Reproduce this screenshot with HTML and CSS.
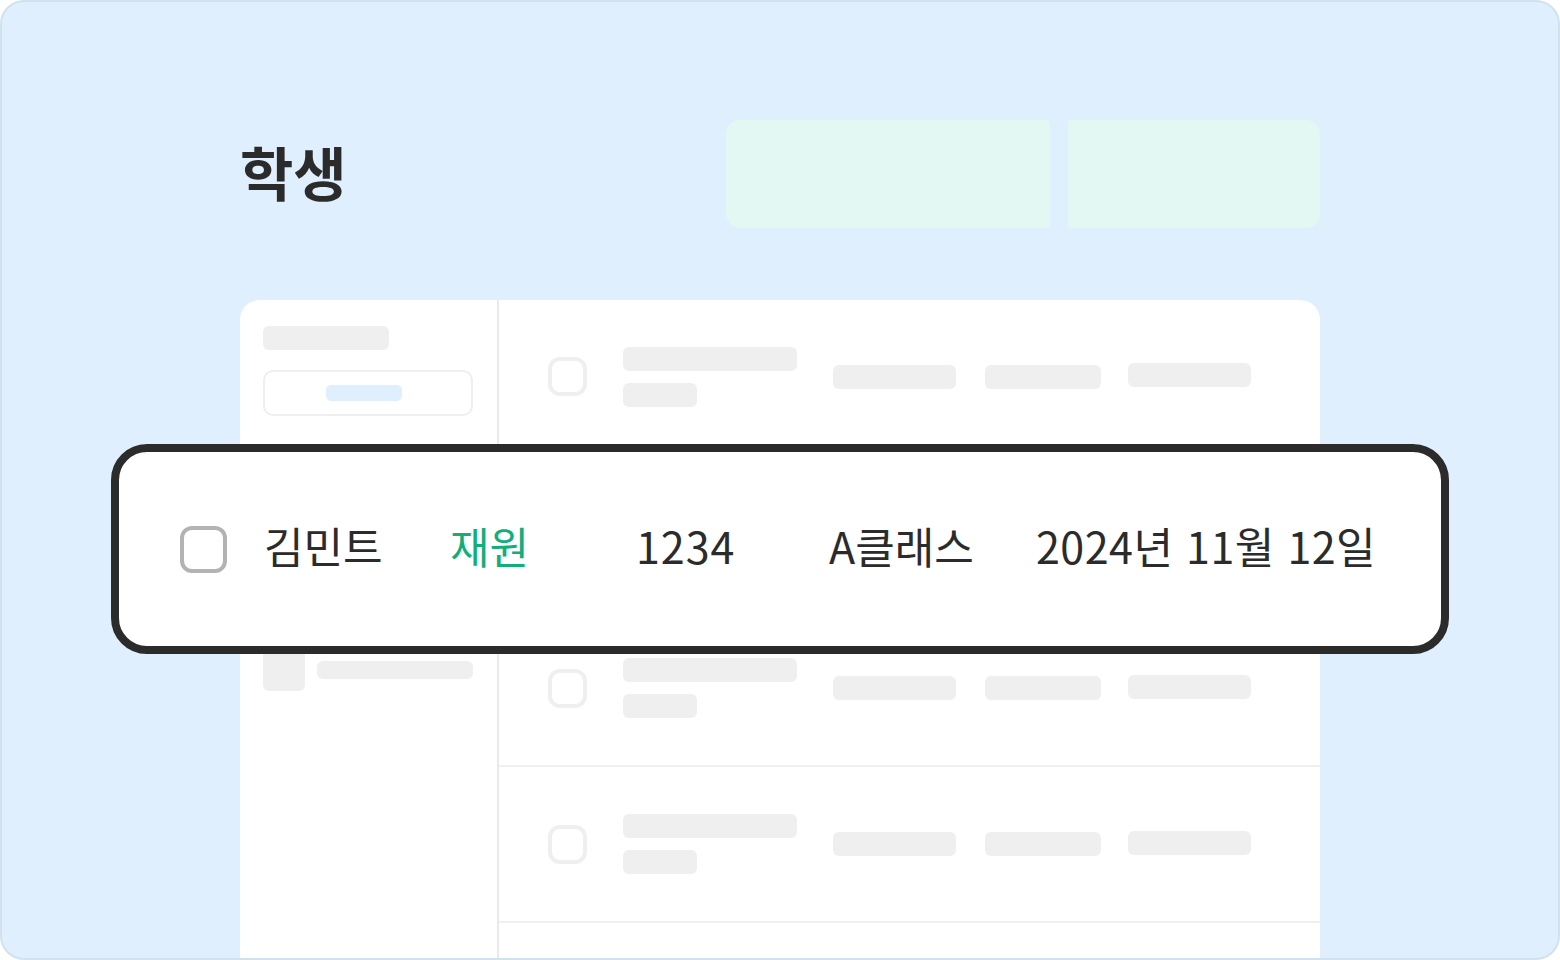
FILE: index.html
```html
<!DOCTYPE html>
<html lang="ko">
<head>
    <meta charset="UTF-8">
    <meta name="viewport" content="width=device-width, initial-scale=1.0">
    <title>학생</title>
    <link rel="stylesheet" href="styles.css">
</head>
<body>
    <div class="frame">
        <header class="page-header">
            <h1>학생</h1>
            <div class="header-actions">
                <div class="action action-left"></div>
                <div class="action action-right"></div>
            </div>
        </header>

        <div class="card">
            <aside class="sidebar">
                <div class="bar side-title"></div>
                <div class="side-button"><span class="side-button-fill"></span></div>
                <div class="side-list">
                    <div class="side-item"><span class="side-icon"></span><span class="bar side-label"></span></div>
                    <div class="side-item"><span class="side-icon"></span><span class="bar side-label"></span></div>
                    <div class="side-item"><span class="side-icon"></span><span class="bar side-label"></span></div>
                    <div class="side-item"><span class="side-icon"></span><span class="bar side-label"></span></div>
                </div>
            </aside>
            <section class="table">
                <div class="row row-first">
                    <span class="check"></span>
                    <div class="name-cell">
                        <span class="bar bar-name"></span>
                        <span class="bar bar-sub"></span>
                    </div>
                    <span class="bar col-a"></span>
                    <span class="bar col-b"></span>
                    <span class="bar col-c"></span>
                </div>
                <div class="row">
                    <span class="check"></span>
                    <div class="name-cell">
                        <span class="bar bar-name"></span>
                        <span class="bar bar-sub"></span>
                    </div>
                    <span class="bar col-a"></span>
                    <span class="bar col-b"></span>
                    <span class="bar col-c"></span>
                </div>
                <div class="row">
                    <span class="check"></span>
                    <div class="name-cell">
                        <span class="bar bar-name"></span>
                        <span class="bar bar-sub"></span>
                    </div>
                    <span class="bar col-a"></span>
                    <span class="bar col-b"></span>
                    <span class="bar col-c"></span>
                </div>
                <div class="row">
                    <span class="check"></span>
                    <div class="name-cell">
                        <span class="bar bar-name"></span>
                        <span class="bar bar-sub"></span>
                    </div>
                    <span class="bar col-a"></span>
                    <span class="bar col-b"></span>
                    <span class="bar col-c"></span>
                </div>
                <div class="row"></div>
            </section>
        </div>

        <!-- 강조된 학생 행 -->
        <div class="highlight">
            <span class="hl-check"></span>
            <span class="hl-cell hl-name">김민트</span>
            <span class="hl-cell hl-status">재원</span>
            <span class="hl-cell hl-number">1234</span>
            <span class="hl-cell hl-class">A클래스</span>
            <span class="hl-cell hl-date">2024년 11월 12일</span>
        </div>
    </div>
</body>
</html>
```

FILE: styles.css
```css
body {
    margin: 0;
    padding: 0;
    background-color: #fff;
    font-family: "Noto Sans CJK KR", "Noto Sans", sans-serif;
    color: #2b2b2b;
}

.frame {
    position: relative;
    width: 1560px;
    height: 960px;
    box-sizing: border-box;
    border: 2px solid #d2e1ee;
    border-radius: 24px;
    background-color: #e0effd;
    overflow: hidden;
}

.page-header {
    display: flex;
    justify-content: space-between;
    align-items: center;
    height: 108px;
    margin-top: 118px;
    padding: 0 238px 0 238px;
}
.page-header h1 {
    margin: -6px 0 0 0;
    font-size: 58px;
    font-weight: 700;
    line-height: 1;
    color: #2b2b2b;
}
.header-actions {
    display: flex;
    gap: 18px;
    height: 100%;
}
.action {
    background-color: #e3f7f3;
    height: 100%;
}
.action-left {
    width: 324px;
    border-radius: 14px 4px 4px 14px;
}
.action-right {
    width: 252px;
    border-radius: 4px 14px 14px 4px;
}

.card {
    display: flex;
    width: 1080px;
    height: 700px;
    margin: 72px 0 0 238px;
    background-color: #fff;
    border-radius: 20px 20px 0 0;
}

.bar {
    display: block;
    background-color: #efefef;
    border-radius: 6px;
}

/* sidebar */
.sidebar {
    width: 259px;
    flex-shrink: 0;
    border-right: 2px solid #e9e9e9;
    padding: 26px 0 0 23px;
    box-sizing: border-box;
}
.side-title {
    width: 126px;
    height: 24px;
}
.side-button {
    display: flex;
    justify-content: center;
    align-items: center;
    width: 210px;
    height: 46px;
    margin-top: 20px;
    box-sizing: border-box;
    border: 2px solid #efefef;
    border-radius: 10px;
}
.side-button-fill {
    width: 76px;
    height: 16px;
    margin-right: 8px;
    background-color: #e0effd;
    border-radius: 5px;
}
.side-list {
    display: flex;
    flex-direction: column;
    gap: 19px;
    margin-top: 50px;
}
.side-item {
    display: flex;
    align-items: center;
    gap: 12px;
}
.side-icon {
    width: 42px;
    height: 42px;
    background-color: #efefef;
    border-radius: 6px;
}
.side-label {
    width: 156px;
    height: 18px;
}

/* table */
.table {
    flex: 1;
    display: flex;
    flex-direction: column;
}
.row {
    display: flex;
    align-items: center;
    height: 156px;
    flex-shrink: 0;
    box-sizing: border-box;
    border-bottom: 2px solid #efefef;
    padding-left: 49px;
}
.row-first {
    height: 155px;
}
.check {
    width: 39px;
    height: 39px;
    box-sizing: border-box;
    border: 4px solid #efefef;
    border-radius: 12px;
}
.name-cell {
    display: flex;
    flex-direction: column;
    gap: 12px;
    margin-left: 36px;
}
.bar-name {
    width: 174px;
    height: 24px;
}
.bar-sub {
    width: 74px;
    height: 24px;
}
.col-a {
    width: 123px;
    height: 24px;
    margin-left: 36px;
}
.col-b {
    width: 116px;
    height: 24px;
    margin-left: 29px;
}
.col-c {
    width: 123px;
    height: 24px;
    margin-left: 27px;
    margin-top: -3px;
}

/* highlighted row */
.highlight {
    position: absolute;
    left: 109px;
    top: 442px;
    width: 1338px;
    height: 210px;
    box-sizing: border-box;
    border: 8px solid #2b2b2b;
    border-radius: 36px;
    background-color: #fff;
    display: flex;
    align-items: center;
    padding-left: 61px;
}
.hl-check {
    width: 47px;
    height: 47px;
    box-sizing: border-box;
    border: 4px solid #b3b3b3;
    border-radius: 12px;
    margin-right: 37px;
    flex-shrink: 0;
}
.hl-cell {
    font-size: 43px;
    line-height: 1;
    margin-top: -8px;
    color: #2b2b2b;
    white-space: nowrap;
}
.hl-name {
    width: 186px;
}
.hl-status {
    width: 186px;
    color: #14ae7a;
}
.hl-number {
    width: 193px;
    letter-spacing: 1px;
}
.hl-class {
    width: 207px;
}
.hl-date {
    letter-spacing: 0.5px;
}
```
